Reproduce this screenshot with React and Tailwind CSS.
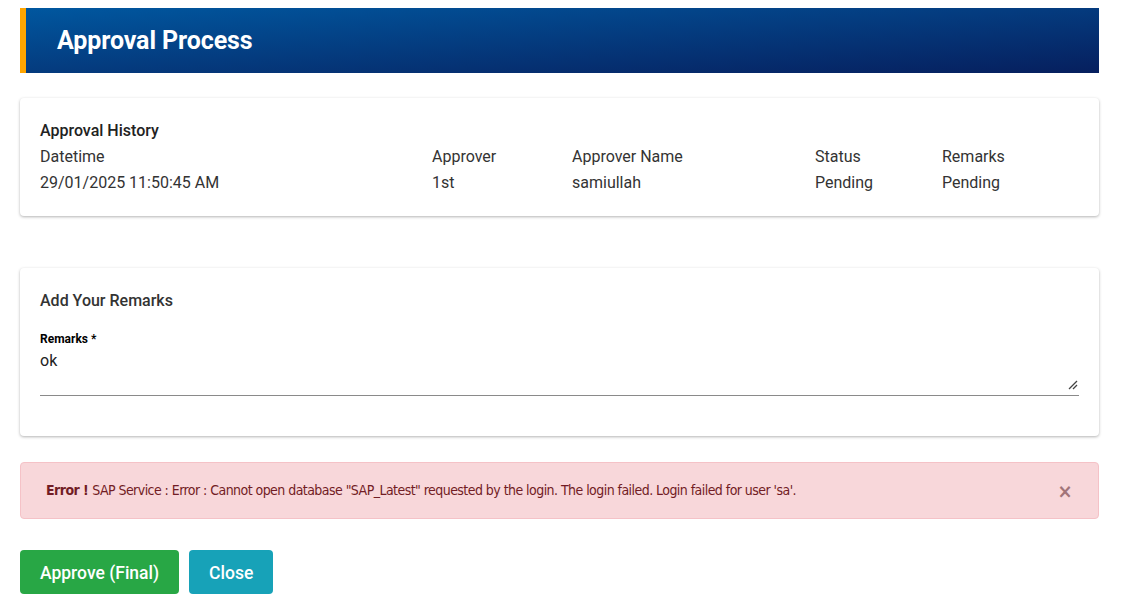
import React from "react";

export default function App() {
  const cols = [
    { h: "Datetime", v: "29/01/2025 11:50:45 AM", w: "w-[392px]" },
    { h: "Approver", v: "1st", w: "w-[140px]" },
    { h: "Approver Name", v: "samiullah", w: "w-[243px]" },
    { h: "Status", v: "Pending", w: "w-[127px]" },
    { h: "Remarks", v: "Pending", w: "flex-1" },
  ];
  return (
    <div className="w-[1124px] h-[604px] bg-white px-5 pt-2 font-['Roboto',sans-serif] text-[#212121]">
      <div className="w-[1079px] h-[65px] flex items-center border-l-[6px] border-[#ffa500] bg-gradient-to-br from-[#00579f] to-[#061f5e] pl-[31px]">
        <h1 className="text-white text-[25px] font-bold tracking-[-0.1px]">Approval Process</h1>
      </div>

      <div className="w-[1079px] mt-[25px] bg-white rounded-[4px] shadow-[0_1px_3px_rgba(0,0,0,0.3)] px-5 pt-[22px] pb-[20px]">
        <div className="text-[16px] font-medium leading-[22px] text-[#222]">Approval History</div>
        <div className="flex mt-[2px] text-[16px] leading-[26px] text-[#333]">
          {cols.map((c) => (
            <div key={c.h} className={c.w}>
              <div>{c.h}</div>
              <div>{c.v}</div>
            </div>
          ))}
        </div>
      </div>

      <div className="w-[1079px] mt-[52px] bg-white rounded-[4px] shadow-[0_1px_3px_rgba(0,0,0,0.3)] px-5 pt-[22px] pb-[40px]">
        <div className="text-[16px] font-medium leading-[22px] text-[#333]">Add Your Remarks</div>
        <div className="mt-[20px] text-[12px] font-bold leading-[14px] text-black">Remarks *</div>
        <div className="relative h-[50px] border-b border-[#8a8a8a] pt-[4px]">
          <div className="text-[16px] leading-[22px] text-[#222]">ok</div>
          <svg className="absolute right-[1px] bottom-[5px]" width="10" height="10" viewBox="0 0 10 10">
            <line x1="1" y1="9" x2="9" y2="1" stroke="#444" strokeWidth="1.2" />
            <line x1="5" y1="9" x2="9" y2="5" stroke="#444" strokeWidth="1.2" />
          </svg>
        </div>
      </div>

      <div className="w-[1079px] h-[57px] mt-[26px] rounded-[4px] bg-[#f8d7da] border border-[#f5c2c7] flex items-center pl-[25px] pr-[26px] text-[#721c24] font-['DejaVu_Sans',sans-serif] [font-stretch:condensed] text-[14px] tracking-[-0.55px]">
        <span className="font-bold mr-[4px]">Error !</span>
        <span className="flex-1">SAP Service : Error : Cannot open database "SAP_Latest" requested by the login. The login failed. Login failed for user 'sa'.</span>
        <span className="text-[#a27479] text-[20px] font-bold leading-none">×</span>
      </div>

      <div className="flex gap-[10px] mt-[31px]">
        <button className="h-[44px] px-[20px] pt-[2px] rounded-[4px] bg-[#28a745] text-white text-[17.5px] font-medium">Approve (Final)</button>
        <button className="h-[44px] px-[20px] pt-[2px] rounded-[4px] bg-[#17a2b8] text-white text-[17.5px] font-medium">Close</button>
      </div>
    </div>
  );
}
